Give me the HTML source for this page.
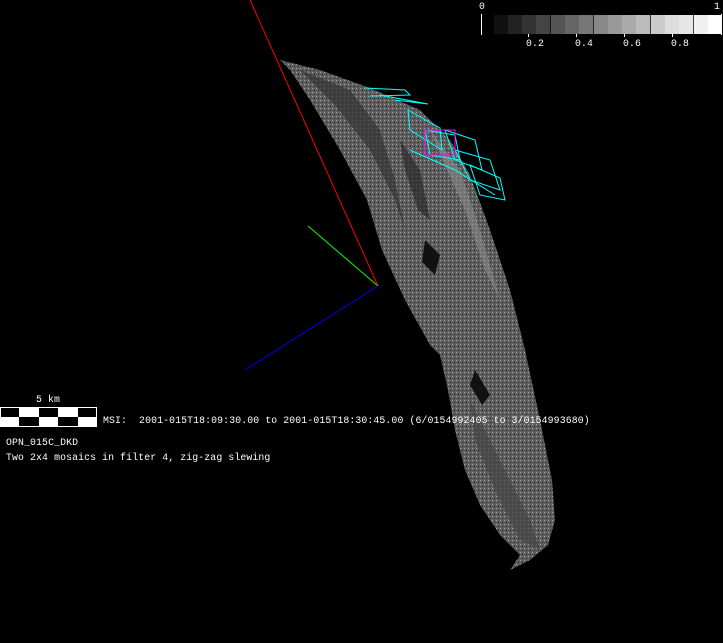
<!DOCTYPE html>
<html><head><style>
body{margin:0;background:#000;width:723px;height:643px;overflow:hidden;position:relative;font-family:"Liberation Mono",monospace;color:#fff}
.t{position:absolute;font-size:9.8px;line-height:10px;white-space:pre;letter-spacing:0.13px}
</style></head><body>
<svg width="723" height="643" style="position:absolute;left:0;top:0">
<defs>
<pattern id="p" width="4" height="4" patternUnits="userSpaceOnUse">
<rect width="4" height="4" fill="#5e5e5e"/>
<rect x="0" y="0" width="1" height="1" fill="#aaa"/>
<rect x="2" y="2" width="1" height="1" fill="#222"/>
</pattern>
</defs>
<polygon fill="url(#p)" points="280,60 320,70 370,88 420,110 450,140 470,175 490,230 510,290 525,350 540,420 552,480 555,520 548,545 530,560 510,570 520,555 500,535 480,505 465,470 455,430 448,390 440,355 430,345 405,300 382,250 367,200 340,150 310,100 290,70"/>
<polygon fill="#333" opacity="0.7" points="300,70 350,90 380,130 395,180 405,230 395,200 370,150 335,105"/>
<polygon fill="#2a2a2a" opacity="0.7" points="400,140 420,170 430,220 418,210 405,170"/>
<polygon fill="#444" opacity="0.7" points="470,400 500,460 530,520 540,550 520,540 495,490 475,440"/>
<polygon fill="#8a8a8a" opacity="0.6" points="430,130 460,170 480,230 500,300 485,270 465,210 445,165"/>
<polygon fill="#111" points="425,240 440,255 435,275 422,262"/>
<polygon fill="#111" points="475,370 490,395 482,405 470,385"/>
<line x1="250" y1="0" x2="378" y2="286" stroke="#f00" stroke-width="1"/>
<line x1="308" y1="226" x2="378" y2="286" stroke="#0f0" stroke-width="1"/>
<line x1="245" y1="370" x2="378" y2="286" stroke="#00f" stroke-width="1"/>
<g fill="none" stroke="#0ff" stroke-width="1">
<polyline points="365,88 405,90 410,95 370,96"/>
<polyline points="380,95 428,104 395,100"/>
<polygon points="408,110 440,128 442,150 410,130"/>
<polygon points="425,130 455,135 460,160 430,155"/>
<polygon points="445,130 475,140 482,170 455,160"/>
<polygon points="455,150 490,160 500,190 470,180"/>
<polygon points="470,165 500,178 505,200 480,195"/>
<polyline points="410,150 455,170 495,195"/>
</g>
<rect x="425" y="130" width="30" height="25" fill="none" stroke="#f0f"/>
<rect x="0" y="407" width="97" height="20" fill="#fff"/>
<g fill="#000">
<rect x="1" y="408" width="18" height="9"/><rect x="39" y="408" width="19" height="9"/><rect x="78" y="408" width="18" height="9"/>
<rect x="19" y="417" width="20" height="9"/><rect x="58" y="417" width="20" height="9"/>
</g>
<g>
<rect x="494" y="15" width="14.3" height="19" fill="#111"/>
<rect x="508" y="15" width="14.3" height="19" fill="#222"/>
<rect x="522" y="15" width="14.3" height="19" fill="#333"/>
<rect x="536" y="15" width="14.3" height="19" fill="#444"/>
<rect x="551" y="15" width="14.3" height="19" fill="#555"/>
<rect x="565" y="15" width="14.3" height="19" fill="#666"/>
<rect x="579" y="15" width="14.3" height="19" fill="#777"/>
<rect x="594" y="15" width="14.3" height="19" fill="#888"/>
<rect x="608" y="15" width="14.3" height="19" fill="#999"/>
<rect x="622" y="15" width="14.3" height="19" fill="#aaa"/>
<rect x="636" y="15" width="14.3" height="19" fill="#bbb"/>
<rect x="651" y="15" width="14.3" height="19" fill="#ccc"/>
<rect x="665" y="15" width="14.3" height="19" fill="#ddd"/>
<rect x="679" y="15" width="14.3" height="19" fill="#e6e6e6"/>
<rect x="694" y="15" width="14.3" height="19" fill="#f0f0f0"/>
<rect x="708" y="15" width="14" height="19" fill="#fff"/>
</g>
<g stroke="#fff">
<line x1="481.5" y1="14" x2="481.5" y2="35"/>
<line x1="528.5" y1="34" x2="528.5" y2="37"/><line x1="576.5" y1="34" x2="576.5" y2="37"/>
<line x1="624.5" y1="34" x2="624.5" y2="37"/><line x1="672.5" y1="34" x2="672.5" y2="37"/>
<line x1="721.5" y1="14" x2="721.5" y2="35"/>
</g>
</svg>
<div class="t" style="left:479px;top:2px">0</div>
<div class="t" style="left:714px;top:2px">1</div>
<div class="t" style="left:526px;top:39px">0.2</div>
<div class="t" style="left:575px;top:39px">0.4</div>
<div class="t" style="left:623px;top:39px">0.6</div>
<div class="t" style="left:671px;top:39px">0.8</div>
<div class="t" style="left:36px;top:395px">5 km</div>
<div class="t" style="left:103px;top:416px">MSI:  2001-015T18:09:30.00 to 2001-015T18:30:45.00 (6/0154992405 to 3/0154993680)</div>
<div class="t" style="left:6px;top:438px">OPN_015C_DKD</div>
<div class="t" style="left:6px;top:453px">Two 2x4 mosaics in filter 4, zig-zag slewing</div>
</body></html>
